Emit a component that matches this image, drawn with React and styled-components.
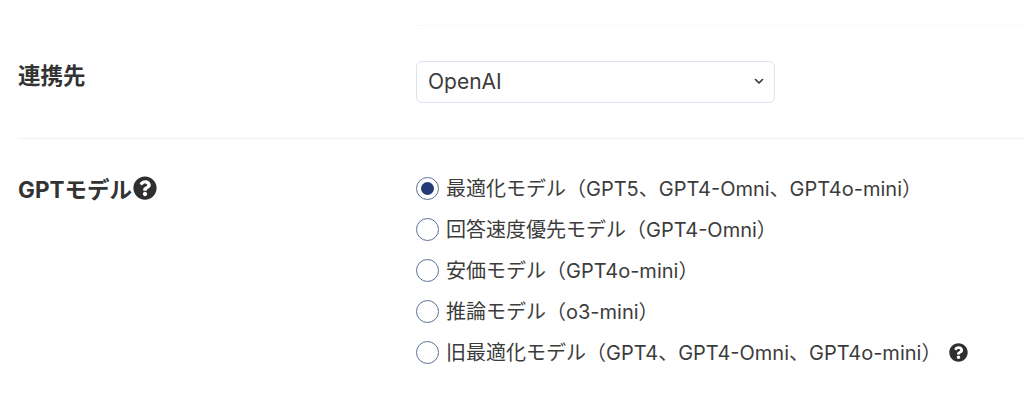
import React from "react";
import styled, { createGlobalStyle } from "styled-components";
import { FaQuestionCircle } from "react-icons/fa";

const Global = createGlobalStyle`
  html, body { margin: 0; padding: 0; background: #fff; }
  body { font-family: Inter, "Noto Sans CJK JP", sans-serif; color: #333; overflow: hidden; }
`;

const Page = styled.div`
  width: 1024px;
  height: 407px;
  padding-left: 18px;
  box-sizing: border-box;
  overflow: hidden;
`;

const TopRule = styled.div`
  height: 25px;
  margin-left: 398px;
  border-bottom: 1px dotted #f4f4f4;
`;

const Row = styled.section`
  display: grid;
  grid-template-columns: 398px 1fr;
  padding-top: ${(p) => p.$top}px;
  padding-bottom: ${(p) => p.$bottom}px;
  border-bottom: ${(p) => (p.$line ? "1px solid #eef2f8" : "none")};
`;

const Label = styled.div`
  display: flex;
  align-items: center;
  height: ${(p) => p.$height}px;
  font-size: 22.5px;
  font-weight: 700;
  color: #333;
`;

const SelectBox = styled.div`
  width: 359px;
  height: 42px;
  box-sizing: border-box;
  border: 1px solid #dbe3f3;
  border-radius: 6px;
  padding: 0 10px 2px 11px;
  display: flex;
  align-items: center;
  justify-content: space-between;
  font-size: 21px;
  color: #3c3c3c;
`;

const Chevron = styled.svg`
  width: 10px;
  height: 10px;
  display: block;
`;

const Options = styled.div`
  display: flex;
  flex-direction: column;
`;

const Option = styled.label`
  display: flex;
  align-items: center;
  height: 41px;
  font-size: 20px;
  color: #3c3c3c;
  white-space: nowrap;
`;

const OptionText = styled.span`
  padding-bottom: 2px;
`;

const Radio = styled.span`
  width: 23px;
  height: 23px;
  box-sizing: border-box;
  flex: none;
  margin-right: 7px;
  border: 1.5px solid #5c6f96;
  border-radius: 50%;
  display: flex;
  align-items: center;
  justify-content: center;
  &::after {
    content: "";
    display: ${(p) => (p.$on ? "block" : "none")};
    width: 13px;
    height: 13px;
    border-radius: 50%;
    background: #233b76;
  }
`;

const Help = styled(FaQuestionCircle)`
  color: #2f2f2f;
  width: ${(p) => p.$size}px;
  height: ${(p) => p.$size}px;
  flex: none;
  margin-left: ${(p) => p.$gap}px;
`;

const options = [
  { text: "最適化モデル（GPT5、GPT4-Omni、GPT4o-mini）", on: true },
  { text: "回答速度優先モデル（GPT4-Omni）" },
  { text: "安価モデル（GPT4o-mini）" },
  { text: "推論モデル（o3-mini）" },
  { text: "旧最適化モデル（GPT4、GPT4-Omni、GPT4o-mini）", help: true },
];

export default function App() {
  return (
    <Page>
      <Global />
      <TopRule />
      <Row $top={35} $bottom={35} $line>
        <Label $height={26}>連携先</Label>
        <SelectBox>
          OpenAI
          <Chevron viewBox="0 0 10 10">
            <path d="M1.5 3.5 L5 7 L8.5 3.5" fill="none" stroke="#333" strokeWidth="1.6" strokeLinecap="round" strokeLinejoin="round" />
          </Chevron>
        </SelectBox>
      </Row>
      <Row $top={29} $bottom={0}>
        <Label $height={39}>
          GPTモデル
          <Help $size={24} $gap={1} />
        </Label>
        <Options>
          {options.map((o) => (
            <Option key={o.text}>
              <Radio $on={o.on} />
              <OptionText>{o.text}</OptionText>
              {o.help && <Help $size={19} $gap={8} />}
            </Option>
          ))}
        </Options>
      </Row>
    </Page>
  );
}
